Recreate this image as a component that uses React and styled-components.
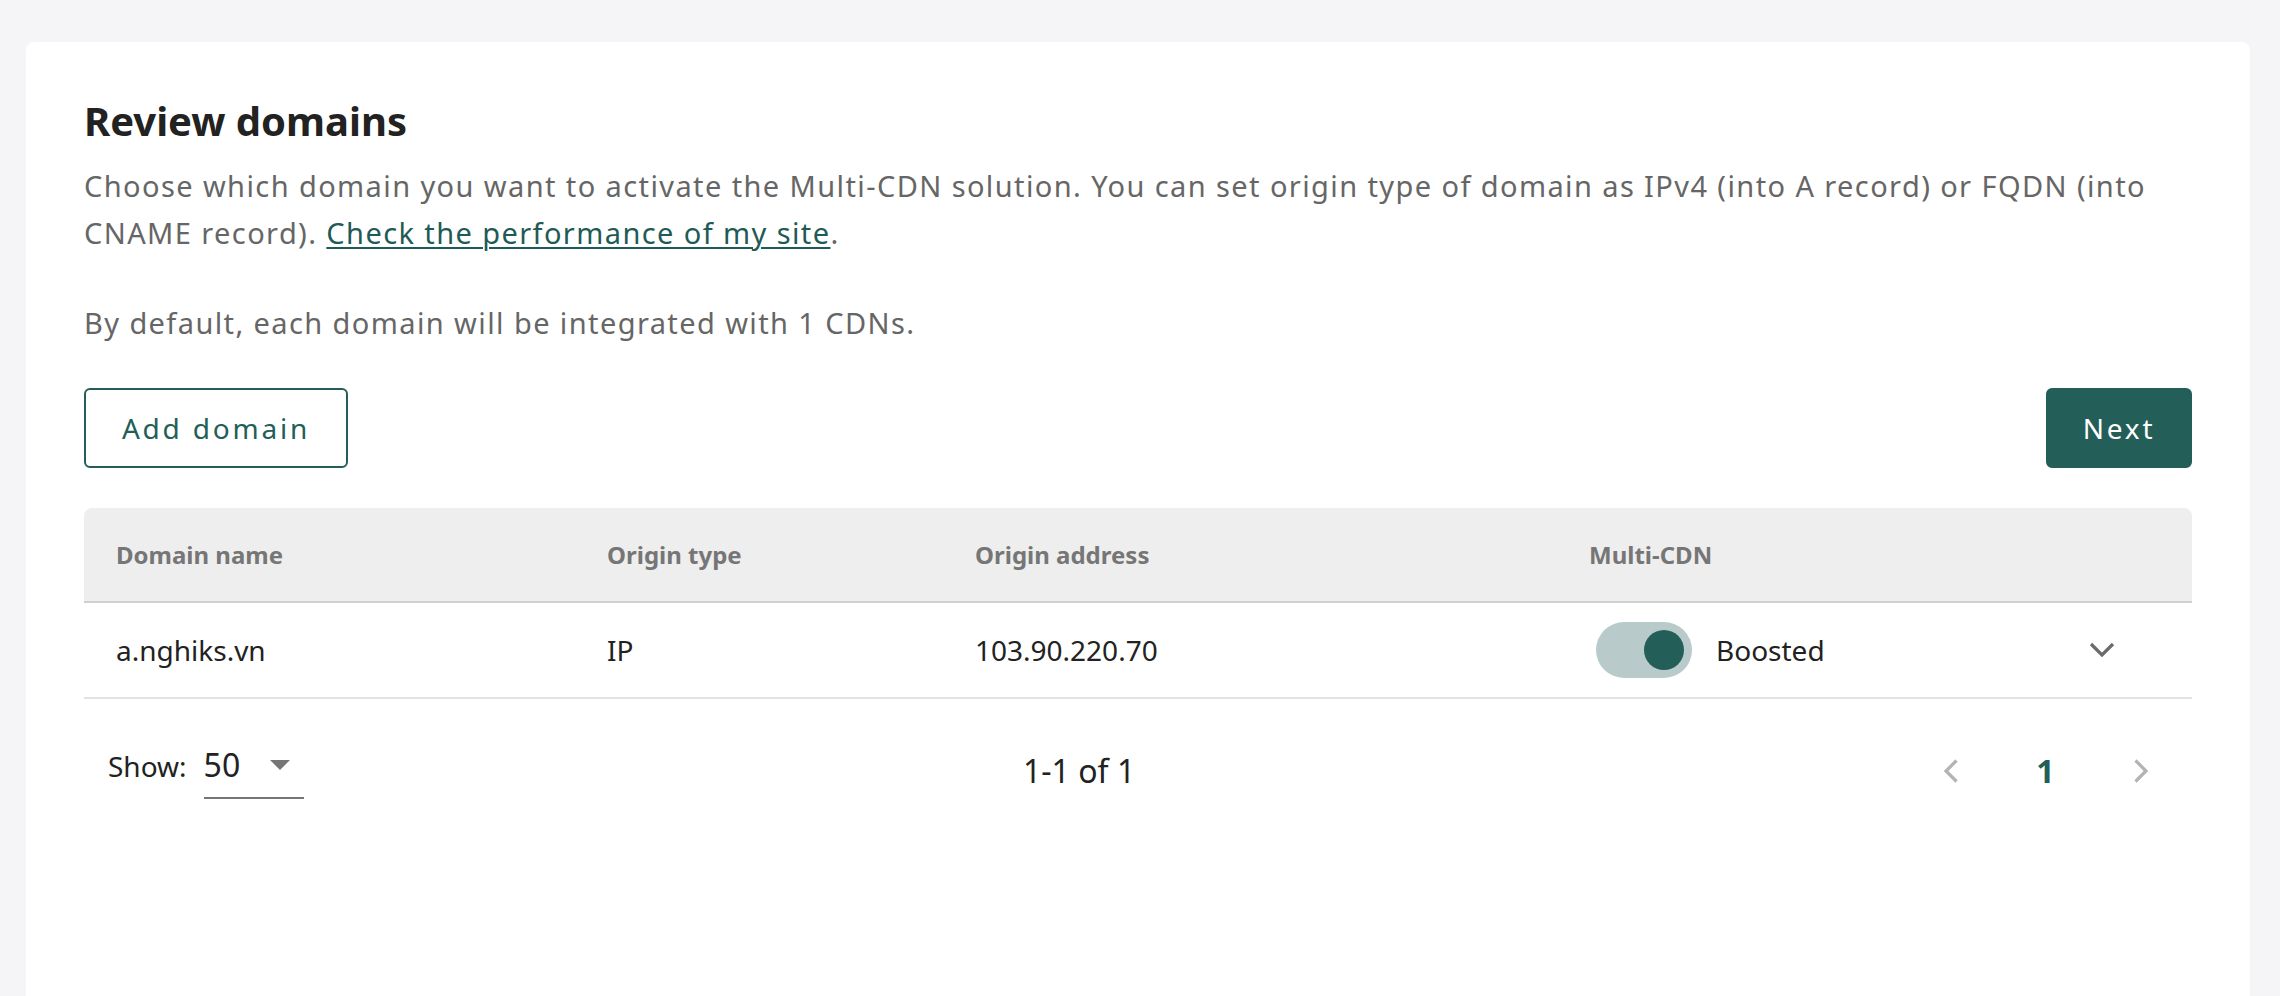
import React from "react";
import styled, { createGlobalStyle } from "styled-components";

const TEAL = "#235e59";

const Global = createGlobalStyle`
  html, body { margin: 0; padding: 0; }
  body {
    background: #f5f5f7;
    font-family: "Noto Sans", "Open Sans", sans-serif;
    -webkit-font-smoothing: antialiased;
  }
  * { box-sizing: border-box; }
`;

const Page = styled.div`
  padding: 42px 30px 0 26px;
  min-height: 996px;
  overflow: hidden;
`;

const Card = styled.section`
  background: #ffffff;
  border-radius: 8px 8px 0 0;
  padding: 52px 58px 80px;
  min-height: 1000px;
`;

const Title = styled.h1`
  margin: 0;
  font-size: 40px;
  line-height: 54px;
  font-weight: 700;
  color: #222222;
`;

const Text = styled.p`
  margin: ${(p) => p.$gap}px 0 0;
  font-size: 29px;
  line-height: 47px;
  letter-spacing: 1.4px;
  color: #666666;
`;

const Link = styled.a`
  color: #1f5b56;
  text-decoration: underline;
  text-decoration-thickness: 2px;
  text-underline-offset: 3px;
  cursor: pointer;
`;

const Actions = styled.div`
  margin-top: 42px;
  display: flex;
  justify-content: space-between;
  align-items: center;
`;

const Button = styled.button`
  height: 80px;
  width: ${(p) => p.$width}px;
  border-radius: 6px;
  border: 2px solid ${TEAL};
  background: ${(p) => (p.$primary ? TEAL : "#ffffff")};
  color: ${(p) => (p.$primary ? "#ffffff" : TEAL)};
  font-family: "Noto Sans", sans-serif;
  font-size: 28px;
  letter-spacing: 2.8px;
  padding: 0;
  cursor: pointer;
`;

const Table = styled.div`
  margin-top: 40px;
`;

const Row = styled.div`
  display: grid;
  grid-template-columns: 491px 368px 614px 1fr 90px;
  padding-right: 45px;
  align-items: center;
  height: ${(p) => (p.$head ? 95 : 96)}px;
  background: ${(p) => (p.$head ? "#eeeeee" : "#ffffff")};
  border-radius: ${(p) => (p.$head ? "8px 8px 0 0" : "0")};
  border-bottom: 2px solid ${(p) => (p.$head ? "#d0d0d0" : "#e2e2e2")};
`;

const HeadCell = styled.div`
  padding-left: 32px;
  font-size: 24px;
  line-height: 33px;
  font-weight: 700;
  color: #767676;
`;

const Cell = styled.div`
  padding-left: 32px;
  font-size: 28px;
  line-height: 38px;
  color: #222222;
  display: flex;
  align-items: center;
`;

const IconCell = styled.div`
  display: flex;
  justify-content: center;
  align-items: center;
`;

const Toggle = styled.div`
  width: 96px;
  height: 56px;
  border-radius: 28px;
  background: #b8cbca;
  margin-left: 7px;
  margin-right: 24px;
  display: flex;
  align-items: center;
  justify-content: flex-end;
  padding-right: 8px;
`;

const Knob = styled.span`
  width: 40px;
  height: 40px;
  border-radius: 50%;
  background: ${TEAL};
`;

const Footer = styled.div`
  display: flex;
  align-items: center;
  padding: 44px 4px 40px 0;
`;

const ShowGroup = styled.div`
  width: 939px;
  padding-left: 24px;
  display: flex;
  align-items: baseline;
  gap: 17px;
`;

const ShowLabel = styled.span`
  font-size: 28px;
  line-height: 38px;
  color: #222222;
`;

const Select = styled.div`
  width: 100px;
  display: flex;
  align-items: center;
  justify-content: space-between;
  padding-bottom: 10px;
  border-bottom: 2px solid #767676;
  font-size: 32px;
  line-height: 44px;
  color: #222222;
`;

const Caret = styled.span`
  width: 0;
  height: 0;
  margin-right: 14px;
  border-left: 10px solid transparent;
  border-right: 10px solid transparent;
  border-top: 10px solid #767676;
`;

const Range = styled.span`
  font-size: 32px;
  line-height: 44px;
  color: #222222;
`;

const Pager = styled.div`
  margin-left: auto;
  display: flex;
`;

const PageButton = styled.div`
  width: 95px;
  height: 44px;
  display: flex;
  align-items: center;
  justify-content: center;
  font-size: 32px;
  line-height: 44px;
  font-weight: 700;
  color: ${TEAL};
`;

const ChevronSide = ({ dir }) => (
  <svg width="16" height="24" viewBox="0 0 16 24" fill="none">
    <path
      d={dir === "left" ? "M13.5 1.5 L3 12 L13.5 22.5" : "M2.5 1.5 L13 12 L2.5 22.5"}
      stroke="#b3b3b3"
      strokeWidth="3.2"
    />
  </svg>
);

const ChevronDown = () => (
  <svg width="26" height="16" viewBox="0 0 26 16" fill="none">
    <path d="M2 2 L13 13 L24 2" stroke="#6b6b6b" strokeWidth="3.2" />
  </svg>
);

export default function App() {
  return (
    <>
      <Global />
      <Page>
        <Card>
          <Title>Review domains</Title>
          <Text $gap={14}>
            Choose which domain you want to activate the Multi-CDN solution. You can set origin
            type of domain as IPv4 (into A record) or FQDN (into CNAME record).{" "}
            <Link>Check the performance of my site</Link>.
          </Text>
          <Text $gap={43}>By default, each domain will be integrated with 1 CDNs.</Text>
          <Actions>
            <Button $width={264}>Add domain</Button>
            <Button $width={146} $primary>
              Next
            </Button>
          </Actions>
          <Table>
            <Row $head>
              <HeadCell>Domain name</HeadCell>
              <HeadCell>Origin type</HeadCell>
              <HeadCell>Origin address</HeadCell>
              <HeadCell>Multi-CDN</HeadCell>
              <div />
            </Row>
            <Row>
              <Cell>a.nghiks.vn</Cell>
              <Cell>IP</Cell>
              <Cell>103.90.220.70</Cell>
              <Cell>
                <Toggle>
                  <Knob />
                </Toggle>
                Boosted
              </Cell>
              <IconCell>
                <ChevronDown />
              </IconCell>
            </Row>
          </Table>
          <Footer>
            <ShowGroup>
              <ShowLabel>Show:</ShowLabel>
              <Select>
                <span>50</span>
                <Caret />
              </Select>
            </ShowGroup>
            <Range>1-1 of 1</Range>
            <Pager>
              <PageButton>
                <ChevronSide dir="left" />
              </PageButton>
              <PageButton>1</PageButton>
              <PageButton>
                <ChevronSide dir="right" />
              </PageButton>
            </Pager>
          </Footer>
        </Card>
      </Page>
    </>
  );
}
